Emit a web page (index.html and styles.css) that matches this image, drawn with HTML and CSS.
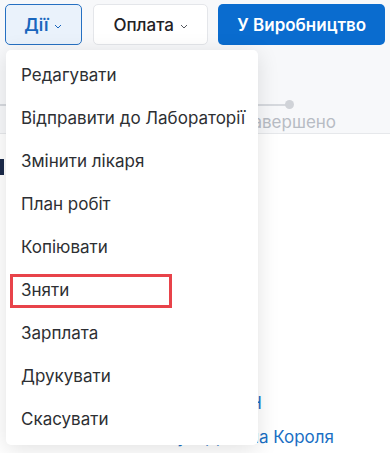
FILE: index.html
```html
<!DOCTYPE html>
<html lang="uk">
  <head>
    <meta charset="UTF-8" />
    <meta name="viewport" content="width=device-width, initial-scale=1.0" />
    <title>Наряд</title>
    <link rel="stylesheet" href="styles.css">
  </head>
  <body>
    <div class="toolbar">
      <button class="btn btn-actions">
        Дії
        <svg class="chevron" viewBox="0 0 8 5"><polyline points="1,1 4,4 7,1" /></svg>
      </button>
      <button class="btn btn-outline">
        Оплата
        <svg class="chevron" viewBox="0 0 8 5"><polyline points="1,1 4,4 7,1" /></svg>
      </button>
      <button class="btn btn-primary">У Виробництво</button>

      <ul class="dropdown-menu">
        <li>Редагувати</li>
        <li>Відправити до Лабораторії</li>
        <li>Змінити лікаря</li>
        <li>План робіт</li>
        <li>Копіювати</li>
        <li class="marked">Зняти</li>
        <li>Зарплата</li>
        <li>Друкувати</li>
        <li>Скасувати</li>
      </ul>
    </div>

    <div class="stepper">
      <div class="step-line"></div>
      <div class="step">
        <span class="step-dot"></span>
        <span class="step-label">Завершено</span>
      </div>
    </div>

    <div class="panel">
      <div class="section-mark"></div>
      <div class="info">
        <div class="info-line first">Стоматологія Н</div>
        <div class="info-line second">вул. Данила Короля</div>
      </div>
    </div>
  </body>
</html>
```

FILE: styles.css
```css
html,
body {
  height: 453px;
  overflow: hidden;
}
body {
  margin: 0;
  font-family: Inter, "Noto Sans", sans-serif;
  background-color: #f7f8fa;
  color: #2d2f33;
}
.toolbar {
  position: relative;
  display: flex;
  gap: 10px;
  padding: 4px 5px 0 5px;
  height: 41px;
}
.btn {
  display: flex;
  align-items: center;
  justify-content: center;
  gap: 6px;
  height: 41px;
  border-radius: 5px;
  font-family: inherit;
  font-size: 17px;
  font-weight: 500;
  cursor: pointer;
}
.btn-actions {
  width: 77px;
  background-color: #eaf2fb;
  border: 1px solid #2670c2;
  color: #1966bd;
  font-weight: 600;
}
.btn-outline {
  width: 116px;
  margin-left: 1px;
  background-color: #fff;
  border: 1px solid #e4e6ea;
  color: #1f2125;
}
.btn-primary {
  width: 167px;
  background-color: #0a6ccf;
  border: none;
  color: #fff;
  font-weight: 600;
}
.chevron {
  width: 8px;
  height: 5px;
  margin-top: 3px;
  fill: none;
  stroke: currentColor;
  stroke-width: 1;
}
.btn-outline .chevron {
  color: #55585e;
}
.dropdown-menu {
  position: absolute;
  top: 50px;
  left: 6px;
  z-index: 10;
  width: 252px;
  margin: 0;
  padding: 4px 0;
  list-style: none;
  background: #fff;
  border-radius: 5px;
  box-shadow: 0 4px 22px rgba(0, 0, 0, 0.12);
}
.dropdown-menu li {
  position: relative;
  height: 43px;
  line-height: 43px;
  padding-left: 15px;
  font-size: 17px;
  color: #2d2f33;
  white-space: nowrap;
}
.dropdown-menu li.marked::after {
  content: "";
  position: absolute;
  left: 4px;
  top: 5px;
  width: 156px;
  height: 28px;
  border: 3px solid #e8434a;
}
.stepper {
  position: relative;
  height: 88px;
  border-bottom: 1px solid #e6e8eb;
}
.step-line {
  position: absolute;
  top: 59px;
  left: 0;
  width: 289px;
  height: 2px;
  background: #d6d9de;
}
.step {
  position: absolute;
  left: 239px;
  top: 55px;
  width: 100px;
  display: flex;
  flex-direction: column;
  align-items: center;
}
.step-dot {
  width: 9px;
  height: 9px;
  border-radius: 50%;
  background: #d0d3d8;
}
.step-label {
  margin-top: 3px;
  font-size: 17px;
  color: #b7bcc4;
}
.panel {
  box-sizing: border-box;
  background: #fff;
  height: 319px;
  padding-top: 25px;
}
.section-mark {
  width: 4px;
  height: 16px;
  background: #1b2a4a;
}
.info {
  margin-top: 211px;
  font-size: 17px;
  color: #1a6fc4;
}
.info-line {
  text-align: right;
  line-height: 34px;
}
.info-line.first {
  width: 262px;
}
.info-line.second {
  width: 334px;
}
```
